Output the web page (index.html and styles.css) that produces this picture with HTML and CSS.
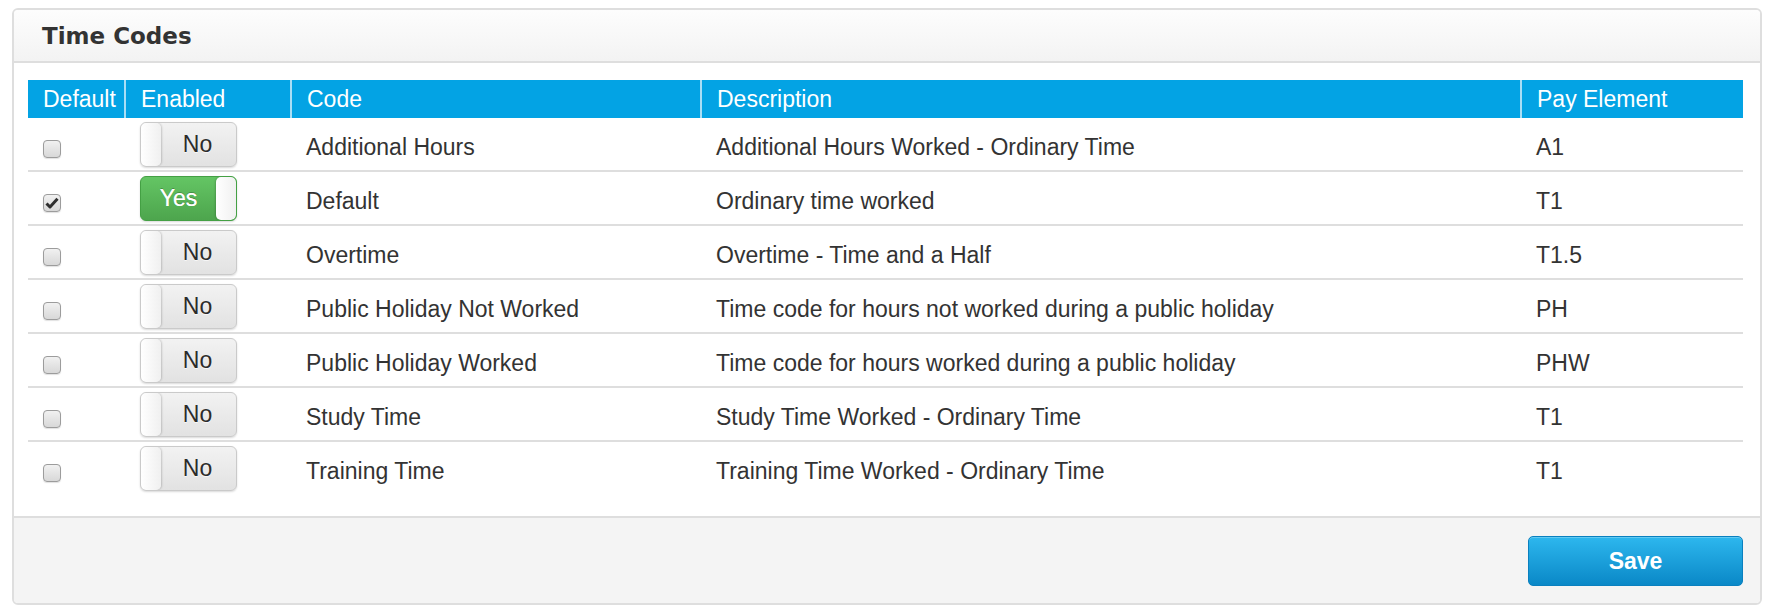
FILE: index.html
```html
<!DOCTYPE html>
<html lang="en">
<head>
  <meta charset="UTF-8" />
  <title>Time Codes</title>
  <link rel="stylesheet" href="styles.css">
</head>
<body>
  <div class="panel">
    <div class="panel-heading">
      <h2>Time Codes</h2>
    </div>

    <div class="panel-body">
      <table class="codes">
        <colgroup>
          <col class="c-default">
          <col class="c-enabled">
          <col class="c-code">
          <col class="c-desc">
          <col class="c-pay">
        </colgroup>
        <thead>
          <tr>
            <th>Default</th>
            <th>Enabled</th>
            <th>Code</th>
            <th>Description</th>
            <th>Pay Element</th>
          </tr>
        </thead>
        <tbody>
          <tr>
            <td><span class="check"></span></td>
            <td><span class="toggle off"><span class="knob"></span><span class="label">No</span></span></td>
            <td class="txt">Additional Hours</td>
            <td class="txt">Additional Hours Worked - Ordinary Time</td>
            <td class="txt">A1</td>
          </tr>
          <tr>
            <td>
              <span class="check checked">
                <svg width="14" height="12" viewBox="0 0 14 12"><path d="M1.5 6.5 L5 10 L12.5 1.8" fill="none" stroke="#2f2f2f" stroke-width="3" stroke-linejoin="round"/></svg>
              </span>
            </td>
            <td><span class="toggle on"><span class="label">Yes</span><span class="knob"></span></span></td>
            <td class="txt">Default</td>
            <td class="txt">Ordinary time worked</td>
            <td class="txt">T1</td>
          </tr>
          <tr>
            <td><span class="check"></span></td>
            <td><span class="toggle off"><span class="knob"></span><span class="label">No</span></span></td>
            <td class="txt">Overtime</td>
            <td class="txt">Overtime - Time and a Half</td>
            <td class="txt">T1.5</td>
          </tr>
          <tr>
            <td><span class="check"></span></td>
            <td><span class="toggle off"><span class="knob"></span><span class="label">No</span></span></td>
            <td class="txt">Public Holiday Not Worked</td>
            <td class="txt">Time code for hours not worked during a public holiday</td>
            <td class="txt">PH</td>
          </tr>
          <tr>
            <td><span class="check"></span></td>
            <td><span class="toggle off"><span class="knob"></span><span class="label">No</span></span></td>
            <td class="txt">Public Holiday Worked</td>
            <td class="txt">Time code for hours worked during a public holiday</td>
            <td class="txt">PHW</td>
          </tr>
          <tr>
            <td><span class="check"></span></td>
            <td><span class="toggle off"><span class="knob"></span><span class="label">No</span></span></td>
            <td class="txt">Study Time</td>
            <td class="txt">Study Time Worked - Ordinary Time</td>
            <td class="txt">T1</td>
          </tr>
          <tr>
            <td><span class="check"></span></td>
            <td><span class="toggle off"><span class="knob"></span><span class="label">No</span></span></td>
            <td class="txt">Training Time</td>
            <td class="txt">Training Time Worked - Ordinary Time</td>
            <td class="txt">T1</td>
          </tr>
        </tbody>
      </table>
    </div>

    <div class="panel-footer">
      <button type="button" class="btn-save">Save</button>
    </div>
  </div>
</body>
</html>
```

FILE: styles.css
```css
:root {
  --border: #dedede;
  --text: #333333;
  --blue-head: #03a3e4;
  --font: "Liberation Sans", Arial, sans-serif;
}

body {
  margin: 0;
  background: #ffffff;
  font-family: var(--font);
  color: var(--text);
}

/* Contenedor principal */
.panel {
  width: 1750px;
  margin: 8px 0 0 12px;
  border: 2px solid var(--border);
  border-radius: 6px;
  box-sizing: border-box;
  background: #fff;
  overflow: hidden;
}

.panel-heading {
  height: 51px;
  display: flex;
  align-items: center;
  padding-left: 28px;
  background: linear-gradient(#fdfdfd, #f3f3f3);
  border-bottom: 2px solid var(--border);
}

.panel-heading h2 {
  margin: 0;
  font-family: "DejaVu Sans", Verdana, sans-serif;
  font-size: 23px;
  font-weight: 700;
  color: #333;
}

.panel-body {
  padding: 17px 16px 22px 14px;
}

/* Tabla de códigos */
.codes {
  width: 1715px;
  table-layout: fixed;
  border-collapse: collapse;
  font-size: 23px;
}

.c-default { width: 97px; }
.c-enabled { width: 166px; }
.c-code { width: 410px; }
.c-desc { width: 820px; }
.c-pay { width: 222px; }

.codes th {
  height: 38px;
  padding: 0 15px;
  background: var(--blue-head);
  color: #fff;
  font-weight: 400;
  text-align: left;
  white-space: nowrap;
}

.codes th + th {
  border-left: 2px solid #a9def5;
}

.codes td {
  height: 52px;
  padding: 0 15px;
  border-bottom: 2px solid var(--border);
  vertical-align: middle;
  white-space: nowrap;
}

.codes tbody tr:last-child td {
  border-bottom: none;
}

.codes td.txt {
  height: 46px;
  padding-top: 6px;
}

/* Casilla */
.check {
  display: inline-flex;
  align-items: center;
  justify-content: center;
  width: 18px;
  height: 18px;
  margin-top: 10px;
  border: 1px solid #9c9c9c;
  border-radius: 4px;
  background: linear-gradient(#f1f1f1, #d8d8d8);
  box-shadow: 0 1px 1px rgba(0, 0, 0, 0.12);
  box-sizing: border-box;
  vertical-align: middle;
}

/* Interruptor Sí / No */
.toggle {
  display: flex;
  width: 97px;
  height: 45px;
  border: 1px solid #cacaca;
  border-radius: 6px;
  box-sizing: border-box;
  overflow: hidden;
  box-shadow: 0 1px 2px rgba(0, 0, 0, 0.15);
}

.toggle .label {
  flex: 1;
  display: flex;
  align-items: center;
  justify-content: center;
  font-size: 23px;
}

.toggle .knob {
  width: 20px;
  background: linear-gradient(90deg, #ffffff, #f0f0f0);
  border-radius: 5px;
}

.toggle.off {
  background: linear-gradient(#f2f2f2, #e2e2e2);
}

.toggle.off .knob {
  box-shadow: 1px 0 2px rgba(0, 0, 0, 0.18);
}

.toggle.off .label {
  color: #2b2b2b;
  padding-right: 2px;
  text-shadow: 0 1px 0 rgba(255, 255, 255, 0.7);
}

.toggle.on {
  background: linear-gradient(#64c564, #4da54d);
  border-color: #44a044;
}

.toggle.on .knob {
  box-shadow: -1px 0 2px rgba(0, 0, 0, 0.18);
}

.toggle.on .label {
  color: #fff;
  text-shadow: 0 -1px 0 rgba(0, 0, 0, 0.25), 0 0 0.4px #fff;
}

/* Pie con botón */
.panel-footer {
  display: flex;
  justify-content: flex-end;
  padding: 18px 17px 17px;
  background: #f4f4f4;
  border-top: 2px solid var(--border);
}

.btn-save {
  width: 215px;
  height: 50px;
  border: 1px solid #0a80bf;
  border-radius: 5px;
  background: linear-gradient(#2db7ee, #0a88c7);
  box-shadow: inset 0 1px 0 rgba(255, 255, 255, 0.25);
  color: #fff;
  font-family: var(--font);
  font-size: 23px;
  font-weight: 700;
  cursor: pointer;
}
```
